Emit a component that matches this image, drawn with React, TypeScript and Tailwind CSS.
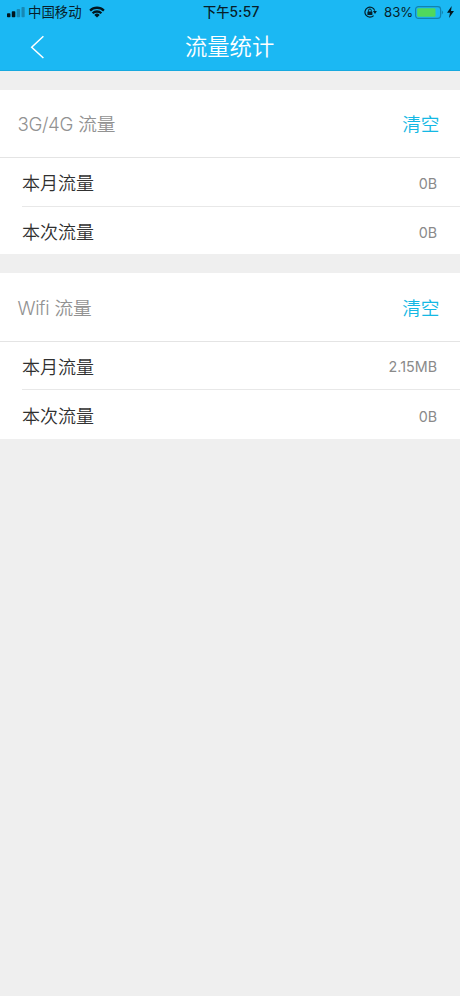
type Entry = { label: string; value: string };

type SectionProps = {
  title: string;
  latin: string;
  rows: Entry[];
  headClass: string;
  firstRow: string;
  lastRow: string;
};

function Section({ title, latin, rows, headClass, firstRow, lastRow }: SectionProps) {
  return (
    <section className="bg-white">
      <div className={`flex items-center justify-between border-b border-[#e4e4e4] pr-[20.5px] pl-[17.5px] text-[18.7px] ${headClass}`}>
        <h2 className="font-[350] whitespace-nowrap text-[#929292]">
          <span className="font-light tracking-[-0.4px]">{latin}</span> {title}
        </h2>
        <button className="font-[350] text-[#14b8e4]">清空</button>
      </div>
      <ul className="pl-[22px]">
        {rows.map((row, i) => (
          <li key={row.label} className={`flex items-center justify-between pr-[23px] ${i === 0 ? `border-b border-[#e8e8e8] ${firstRow}` : lastRow}`}>
            <span className="pt-[3px] text-[18px] font-[350] text-[#303030]">{row.label}</span>
            <span className={`text-[14.3px] text-[#8a8a8a] ${i === 0 ? "pt-[3px]" : "pt-[5px]"}`}>{row.value}</span>
          </li>
        ))}
      </ul>
    </section>
  );
}

function StatusBar() {
  return (
    <div className="flex h-6 items-center pl-[7px] text-[13.4px] leading-6 text-[#071e29]">
      <svg className="h-[11px] w-[18px] shrink-0" viewBox="0 0 18 11">
        <rect x="0" y="6.2" width="3.4" height="4" rx="0.8" fill="#02161f" />
        <rect x="4.8" y="4.2" width="3.5" height="6" rx="0.8" fill="#02161f" />
        <rect x="9.7" y="2" width="3.4" height="8.2" rx="0.8" fill="#1688b4" />
        <rect x="14.5" y="0" width="3.2" height="10.2" rx="0.8" fill="#1688b4" />
      </svg>
      <span className="ml-[3px] w-[54px] whitespace-nowrap">中国移动</span>
      <svg className="ml-[7px] h-[12px] w-4 shrink-0" viewBox="0 0 16 12">
        <path d="M0.3 3.7a11 11 0 0 1 15.4 0l-1.6 1.8a8.8 8.8 0 0 0-12.2 0z" fill="#02161f" />
        <path d="M2.8 6.4a7.4 7.4 0 0 1 10.4 0l-1.6 1.7a5.3 5.3 0 0 0-7.2 0z" fill="#02161f" />
        <path d="M5.3 8.9a3.9 3.9 0 0 1 5.4 0L8 11.6z" fill="#02161f" />
      </svg>
      <span className="ml-[98px] w-[57px] whitespace-nowrap text-[13.2px] font-medium">
        下午<span className="text-[13.8px] tracking-[0.3px]">5:57</span>
      </span>
      <svg className="ml-[104px] h-[13px] w-[13px] shrink-0" viewBox="0 0 13 13" fill="none">
        <path d="M9.6 9.6A5 5 0 1 1 10.7 4.6" stroke="#04202c" strokeWidth="1.2" />
        <path d="M8.9 5.1h4l-1.9 2.8z" fill="#04202c" />
        <rect x="3.4" y="5.4" width="5" height="3.7" rx="0.5" fill="#04202c" />
        <path d="M4.5 5.7V4.4a1.4 1.4 0 0 1 2.8 0v1.3" stroke="#04202c" strokeWidth="1" />
      </svg>
      <span className="ml-[7px] w-[29px] whitespace-nowrap text-[13.2px]">83%</span>
      <svg className="ml-[2px] h-[13px] w-[29px] shrink-0" viewBox="0 0 29 13">
        <rect x="0.6" y="0.6" width="25" height="11.8" rx="2.8" fill="none" stroke="#1283b0" strokeWidth="1.2" />
        <rect x="2.2" y="2.2" width="18.3" height="8.6" rx="1.2" fill="#50d85d" />
        <path d="M26.8 4.3q2.4 2.2 0 4.4z" fill="#1283b0" />
      </svg>
      <svg className="ml-[3px] h-[12px] w-[7px] shrink-0" viewBox="0 0 7 12">
        <path d="M4.7 0L0 6.8h3L2 12l5-7H4z" fill="#02161f" />
      </svg>
    </div>
  );
}

export default function App() {
  return (
    <main className="h-[996px] w-[460px] overflow-hidden bg-[#efefef] font-['Inter','Noto_Sans_CJK_SC',sans-serif]">
      <header className="h-[71px] border-b border-[#17a9df] bg-[#1bb8f3]">
        <StatusBar />
        <div className="flex h-[45px] items-center pl-[30px] text-white">
          <button aria-label="返回" className="w-[15px]">
            <svg className="h-6 w-[15px]" viewBox="0 0 15 24" fill="none">
              <path d="M13.4 1.2L1.7 12.2L13.4 23" stroke="white" strokeWidth="1.5" />
            </svg>
          </button>
          <h1 className="ml-[140px] whitespace-nowrap text-[22.3px] leading-[43px] font-[350]">流量统计</h1>
        </div>
      </header>
      <div className="flex flex-col gap-[19px] pt-[19px]">
        <Section
          latin="3G/4G"
          title="流量"
          headClass="h-[68px] pt-[3px]"
          firstRow="h-[49px]"
          lastRow="h-[47px]"
          rows={[{ label: "本月流量", value: "0B" }, { label: "本次流量", value: "0B" }]}
        />
        <Section
          latin="Wifi"
          title="流量"
          headClass="h-[69px] pt-[4px]"
          firstRow="h-[48px]"
          lastRow="h-[49px]"
          rows={[{ label: "本月流量", value: "2.15MB" }, { label: "本次流量", value: "0B" }]}
        />
      </div>
    </main>
  );
}
